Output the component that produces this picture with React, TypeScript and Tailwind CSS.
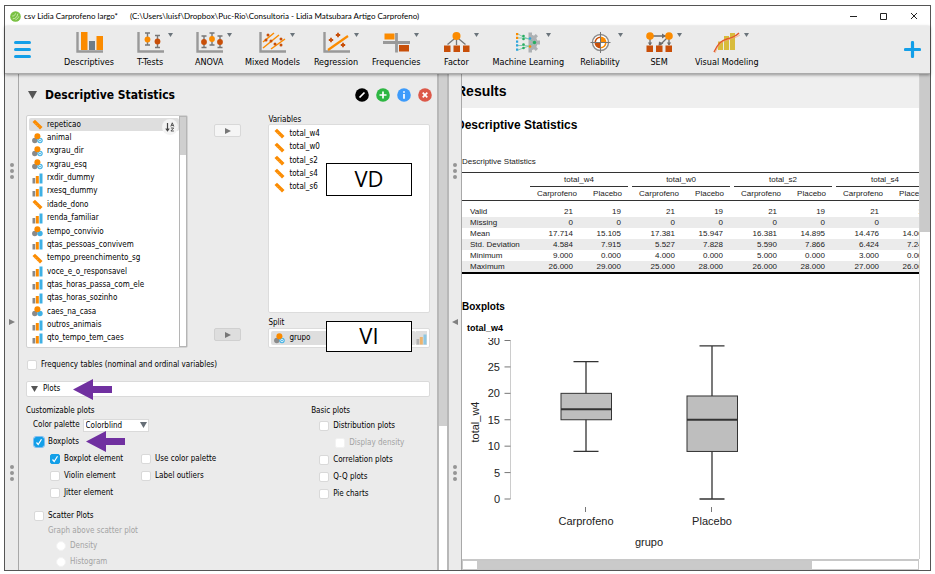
import type { ReactNode } from 'react'
import { clsx } from 'clsx'

type VariableType = 'scale' | 'nominal' | 'nominalText' | 'ordinal'

interface Variable {
  name: string
  type: VariableType
}

const AVAILABLE: Variable[] = [
  { name: 'repeticao', type: 'scale' },
  { name: 'animal', type: 'nominalText' },
  { name: 'rxgrau_dir', type: 'nominalText' },
  { name: 'rxgrau_esq', type: 'nominalText' },
  { name: 'rxdir_dummy', type: 'ordinal' },
  { name: 'rxesq_dummy', type: 'ordinal' },
  { name: 'idade_dono', type: 'scale' },
  { name: 'renda_familiar', type: 'ordinal' },
  { name: 'tempo_convivio', type: 'nominal' },
  { name: 'qtas_pessoas_convivem', type: 'ordinal' },
  { name: 'tempo_preenchimento_sg', type: 'scale' },
  { name: 'voce_e_o_responsavel', type: 'ordinal' },
  { name: 'qtas_horas_passa_com_ele', type: 'ordinal' },
  { name: 'qtas_horas_sozinho', type: 'ordinal' },
  { name: 'caes_na_casa', type: 'nominal' },
  { name: 'outros_animais', type: 'ordinal' },
  { name: 'qto_tempo_tem_caes', type: 'ordinal' },
]

const SELECTED = ['total_w4', 'total_w0', 'total_s2', 'total_s4', 'total_s6']

const GROUPS = ['total_w4', 'total_w0', 'total_s2', 'total_s4']

const STATS = [
  { label: 'Valid', values: ['21', '19', '21', '19', '21', '19', '21', '19'] },
  { label: 'Missing', values: ['0', '0', '0', '0', '0', '0', '0', '0'] },
  { label: 'Mean', values: ['17.714', '15.105', '17.381', '15.947', '16.381', '14.895', '14.476', '14.000'] },
  { label: 'Std. Deviation', values: ['4.584', '7.915', '5.527', '7.828', '5.590', '7.866', '6.424', '7.243'] },
  { label: 'Minimum', values: ['9.000', '0.000', '4.000', '0.000', '5.000', '0.000', '3.000', '0.000'] },
  { label: 'Maximum', values: ['26.000', '29.000', '25.000', '28.000', '26.000', '28.000', '27.000', '26.000'] },
]

const ORANGE = '#fb8b00'
const RUST = '#c84f09'
const GREY = '#999999'

// ---------- ribbon icons (27 x 21) ----------

function Axes() {
  return <path d="M1.5 0V19.5H27" fill="none" stroke={GREY} strokeWidth="2.4" />
}

function ErrorBar({ x, y, top, bottom, color }: { x: number; y: number; top: number; bottom: number; color: string }) {
  return (
    <g>
      <path d={`M${x} ${top}V${bottom}M${x - 2.5} ${top}h5M${x - 2.5} ${bottom}h5`} stroke="#777" strokeWidth="1.4" fill="none" />
      <circle cx={x} cy={y} r="2.9" fill={color} />
    </g>
  )
}

function Star({ x, y }: { x: number; y: number }) {
  return <path d={`M${x - 2.2} ${y}h4.4M${x} ${y - 2.2}v4.4`} stroke={RUST} strokeWidth="1.8" />
}

const ICONS: Record<string, ReactNode> = {
  Descriptives: (
    <>
      <Axes />
      <path d="M5 0h6.5v18H5zM20.5 4H27v14h-6.5z" fill={ORANGE} />
      <path d="M13 9h6v9h-6z" fill="#6f7d87" />
    </>
  ),
  'T-Tests': (
    <>
      <Axes />
      <ErrorBar x={10.5} y={7.5} top={1} bottom={13} color={ORANGE} />
      <ErrorBar x={20.5} y={9.5} top={3.5} bottom={15.5} color={RUST} />
    </>
  ),
  ANOVA: (
    <>
      <Axes />
      <ErrorBar x={8} y={10} top={4} bottom={15.5} color={RUST} />
      <ErrorBar x={16} y={7} top={1} bottom={13} color={ORANGE} />
      <ErrorBar x={24} y={10} top={4} bottom={15.5} color={RUST} />
    </>
  ),
  'Mixed Models': (
    <>
      <Axes />
      <path d="M4 10L15 1M4 16L20 3M12 17L26 7" stroke={ORANGE} strokeWidth="1.5" />
      <g fill={RUST}>
        <circle cx="9" cy="3" r="1.5" /><circle cx="7" cy="8" r="1.5" /><circle cx="12" cy="9" r="1.5" />
        <circle cx="16" cy="12" r="1.5" /><circle cx="22" cy="7" r="1.5" /><circle cx="22" cy="13" r="1.5" />
      </g>
    </>
  ),
  Regression: (
    <>
      <Axes />
      <path d="M5 18L25 4" stroke={ORANGE} strokeWidth="2.2" />
      <Star x={8} y={8} /><Star x={15} y={3} /><Star x={20} y={13} />
    </>
  ),
  Frequencies: (
    <>
      <path d="M1.5 1.5h10v6h-10z" fill={ORANGE} />
      <path d="M16 13h10v6.5H16z" fill={RUST} />
      <path d="M0 10.5h27M13.5 1v19.5" stroke={GREY} strokeWidth="2.8" />
    </>
  ),
  Factor: (
    <>
      <path d="M13.5 5L4.500 12.500M13.500 5v8M13.500 5l9 7.500" stroke="#777" strokeWidth="1.3" />
      <circle cx="13.5" cy="4" r="4" fill={ORANGE} />
      <path d="M1 13.5h6.5v6.5H1zM10.5 13.5H17v6.5h-6.5zM20 13.5h6.5v6.5H20z" fill={RUST} />
    </>
  ),
  'Machine Learning': (
    <>
      <path d="M13.5 0.5H17V3a8 8 0 0 1 2 .8L20.800 2L23 4.200L21.300 6a8 8 0 0 1 .9 2.500H25V12.500H22.200a8 8 0 0 1-.9 2.500L23 16.800L20.800 19L19 17.200a8 8 0 0 1-2 .8V20.500H13.500z" fill="#adb1b3" />
      <path d="M3 2L8.500 5L14 7L19.500 10.500L14 14L8.500 16L3 18M3 6H8.500M3 13.500H8.500L14 14M8.500 6L14 7" stroke="#79c9a8" strokeWidth=".9" fill="none" />
      <path d="M1 1h2.200v2.200H1zM1 4.700h2.200v2.200H1z" fill={ORANGE} />
      <path d="M1 8.500h2.200v2.200H1zM1 12.300h2.200v2.200H1zM1 16.500h2.200v2.200H1z" fill="#2da5dc" />
      <g fill="#27ae60">
        <circle cx="8.5" cy="4" r="1.3" /><circle cx="8.500" cy="7" r="1.3" />
        <circle cx="8.5" cy="12.500" r="1.3" /><circle cx="8.500" cy="16" r="1.3" /><circle cx="19.5" cy="10.5" r="1.7" />
      </g>
      <circle cx="15" cy="6.500" r="1.3" fill="#2da5dc" />
      <circle cx="15" cy="14.500" r="1.3" fill={ORANGE} />
    </>
  ),
  Reliability: (
    <>
      <circle cx="13.5" cy="10.5" r="8" fill="#fff" stroke="#8c8c8c" strokeWidth="1.4" />
      <path d="M13.5 10.5V4.500A6 6 0 0 1 19.500 10.500z" fill={ORANGE} />
      <path d="M13.5 10.500V16.500A6 6 0 0 1 7.500 10.500z" fill={RUST} />
      <path d="M8.200 10.500A5.300 5.300 0 0 1 13.500 5.200" fill="none" stroke={RUST} strokeWidth="1.6" />
      <path d="M18.800 10.500A5.300 5.300 0 0 1 13.500 15.800" fill="none" stroke={ORANGE} strokeWidth="1.6" />
      <path d="M13.5 0v21M3.500 10.500h20" stroke="#777" strokeWidth="1" />
    </>
  ),
  SEM: (
    <>
      <path d="M4 4h18M4 6v7M23 6v7M22 5l-8 8" stroke="#6c6c6c" strokeWidth="1.3" />
      <path d="M16 1.500L20 4l-4 2.500zM1.800 10.500h4.400L4 13.500zM20.800 10.500h4.400L23 13.500zM13 9.500l4.500 2L12.500 14z" fill="#6c6c6c" />
      <circle cx="4" cy="4" r="3.8" fill={ORANGE} /><circle cx="23" cy="4" r="3.8" fill={ORANGE} />
      <path d="M.5 13.500H7V20H.5zM10 13.500h6.500V20H10zM19.500 13.500H26V20h-6.500z" fill={RUST} />
    </>
  ),
  'Visual Modeling': (
    <>
      <path d="M5 9.5h5V18H5zM11 4h5v14h-5zM17 1h5v17h-5z" fill="#d8bc3c" />
      <path d="M1 20C5 12 8 8.500 14 7S23 4 26 1" stroke="#e4572a" strokeWidth="1.4" fill="none" />
      <path d="M2 21C6 11 10 9.500 15 8S24 5 27 3" stroke="#eea36d" strokeWidth=".7" fill="none" />
    </>
  ),
}

const MODULES = Object.keys(ICONS)

function RibbonButton({ name }: { name: string }) {
  return (
    <button type="button" className="flex min-w-[46px] shrink-0 flex-col items-center gap-[3px]">
      <span className="flex items-start">
        <svg viewBox="0 0 27 21" className="ml-[9px] h-[21px] w-[27px]" aria-hidden="true">{ICONS[name]}</svg>
        <svg viewBox="0 0 5 4" className="ml-1 mt-px h-1 w-[5px]" aria-hidden="true">
          {name !== 'Descriptives' && <path d="M0 0h5L2.500 4z" fill="#6b747b" />}
        </svg>
      </span>
      <span className="whitespace-nowrap text-[9px] leading-[12px] text-black">{name}</span>
    </button>
  )
}

// ---------- variable lists ----------

function TypeIcon({ type, faded }: { type: VariableType; faded?: boolean }) {
  return (
    <svg viewBox="0 0 11 11" className={clsx('size-[11px] shrink-0', faded && 'opacity-50')} aria-hidden="true">
      {type === 'scale' && (
        <>
          <path d="M.5 3L3 .7L10.500 8L8 10.500z" fill={ORANGE} />
          <path d="M3 5.300l1-1M4.700 7l1-1M6.500 8.700l1-1" stroke="#ffc27a" strokeWidth=".6" />
        </>
      )}
      {type === 'ordinal' && (
        <>
          <path d="M.5 5h2.700v5.500H.5z" fill="#8a8a8a" />
          <path d="M3.800 3h3v7.500h-3z" fill={ORANGE} />
          <path d="M7.500 .5h3v10h-3z" fill="#3fb0e4" />
        </>
      )}
      {(type === 'nominal' || type === 'nominalText') && (
        <>
          <circle cx="2.8" cy="7.5" r="2.7" fill="#8a8a8a" />
          <circle cx="8" cy="7.5" r="2.7" fill="#3fb0e4" />
          <circle cx="5.4" cy="3.2" r="3" fill={ORANGE} />
          {type === 'nominalText' && <circle cx="8" cy="7.5" r="1.3" fill="none" stroke="#fff" strokeWidth=".8" />}
        </>
      )}
    </svg>
  )
}

function VariableRow({ name, type, selected }: Variable & { selected?: boolean }) {
  return (
    <li className={clsx('flex flex-1 items-center gap-1 rounded-[2px] pl-[3px] text-[8px] leading-none', selected && 'bg-[#dedede]')}>
      <TypeIcon type={type} />
      <span>{name}</span>
    </li>
  )
}

function AssignButton({ label, active }: { label: string; active?: boolean }) {
  return (
    <button
      type="button"
      aria-label={label}
      className={clsx('flex h-[13px] w-[27px] items-center justify-center rounded-[2px] border', active ? 'border-[#d0d0d0] bg-[#dedede]' : 'border-[#d8d8d8] bg-[#f5f5f5]')}
    >
      <svg viewBox="0 0 6 6" className="size-[6px]" aria-hidden="true"><path d="M0 0l6 3l-6 3z" fill="#777" /></svg>
    </button>
  )
}

// ---------- form controls ----------

interface ToggleProps {
  label: string
  kind?: 'checkbox' | 'radio'
  checked?: boolean
  focused?: boolean
  disabled?: boolean
  className?: string
}

function Toggle({ label, kind = 'checkbox', checked, focused, disabled, className }: ToggleProps) {
  return (
    <label className={clsx('flex h-[17px] items-center gap-1 whitespace-nowrap', disabled && 'text-[#a3a3a3]', className)}>
      <span className="relative flex">
        <input
          type={kind}
          defaultChecked={checked}
          disabled={disabled}
          className={clsx(
            'size-[10px] appearance-none border border-[#d9d9d9] bg-white checked:border-[#139fe8] checked:bg-[#139fe8] disabled:border-[#f2f2f2]',
            kind === 'radio' ? 'rounded-full' : 'rounded-[2px]',
            focused && 'outline outline-[#7fbdf0]',
          )}
        />
        {checked && (
          <svg viewBox="0 0 10 10" className="pointer-events-none absolute inset-0 size-[10px]" aria-hidden="true">
            <path d="M2.500 5.500L4.200 7.500L7.500 2.300" stroke="#fff" strokeWidth="1.2" fill="none" />
          </svg>
        )}
      </span>
      {label}
    </label>
  )
}

function Arrow({ className }: { className: string }) {
  return (
    <svg viewBox="0 0 39 21" className={clsx('absolute h-[21px] w-[39px]', className)} aria-hidden="true">
      <path d="M0 10.500L20 0V7H39V14H20V21z" fill="#7030a0" />
    </svg>
  )
}

function Note({ children, className }: { children: string; className: string }) {
  return (
    <div className={clsx('absolute flex w-[86px] items-center justify-center border border-black bg-white pb-[3px] font-[Open_Sans,sans-serif] text-[22px] leading-none text-black', className)}>
      {children}
    </div>
  )
}

function Grip() {
  return (
    <span className="flex flex-col gap-[2px]">
      <i className="size-1 rounded-full bg-[#959595]" />
      <i className="size-1 rounded-full bg-[#959595]" />
      <i className="size-1 rounded-full bg-[#959595]" />
    </span>
  )
}

function Splitter({ direction }: { direction: 'left' | 'right' }) {
  return (
    <div className={clsx('flex shrink-0 flex-col items-center justify-between border-r border-[#a8a8a8] bg-[#ebebeb] py-[89px]', direction === 'right' ? 'w-[14px]' : 'w-[13px]')}>
      <Grip />
      <svg viewBox="0 0 6 6" className="size-[6px]" aria-hidden="true">
        <path d={direction === 'right' ? 'M0 0l6 3l-6 3z' : 'M6 0L0 3l6 3z'} fill="#808080" />
      </svg>
      <Grip />
    </div>
  )
}

function ActionIcon({ label, color, path }: { label: string; color: string; path: string }) {
  return (
    <button type="button" aria-label={label}>
      <svg viewBox="0 0 14 14" className="size-[14px]" aria-hidden="true">
        <circle cx="7" cy="7" r="6.8" fill={color} />
        <path d={path} stroke="#fff" strokeWidth="1.7" fill="none" />
      </svg>
    </button>
  )
}

function VariablesSection() {
  return (
    <div className="relative grid h-[233px] grid-cols-[2fr_1fr_2fr]">
      <div className="relative flex min-h-0 rounded-[2px] border border-[#d2d2d2] bg-white">
        <ul className="flex flex-1 flex-col py-[2px] pl-[2px]">
          {AVAILABLE.map((v, i) => (
            <VariableRow key={v.name} {...v} selected={i === 0} />
          ))}
        </ul>
        <button type="button" aria-label="Sort variables" className="absolute top-[3px] right-[9px] flex size-4 items-center justify-center rounded-full bg-[#f3f3f3]">
          <svg viewBox="0 0 10 10" className="size-[10px]" aria-hidden="true">
            <path d="M2.500 1v7M.8 6.500L2.500 8.800L4.200 6.500" stroke="#444" strokeWidth="1.2" fill="none" />
            <path d="M5.800 4.500L7.300 .8L8.800 4.500M6.300 3.400h2M5.900 6h2.800L5.900 9h3" stroke="#444" strokeWidth=".9" fill="none" />
          </svg>
        </button>
        <div className="w-[8px] border border-[#b5b5b5] bg-white">
          <div className="h-[38px] bg-[#cfcfcf]" />
        </div>
      </div>
      <div className="flex flex-col items-center justify-between pt-[9px] pb-[7px]">
        <AssignButton label="Assign to variables" />
        <AssignButton label="Assign to split" active />
      </div>
      <div className="flex flex-col">
        <h2 className="leading-[9px]">Variables</h2>
        <div className="flex-1 rounded-[2px] border border-[#dcdcdc] bg-white px-[2px] pt-[2px]">
          <ul className="flex h-[67px] flex-col">
            {SELECTED.map((name) => (
              <VariableRow key={name} name={name} type="scale" />
            ))}
          </ul>
        </div>
        <h2 className="pt-[5px] leading-[10px]">Split</h2>
        <div className="flex h-5 rounded-[2px] border border-[#dcdcdc] bg-white p-[2px]">
          <ul className="flex flex-1">
            <VariableRow name="grupo" type="nominalText" selected />
          </ul>
          <span className="flex items-end bg-[#dedede]"><TypeIcon type="ordinal" faded /></span>
        </div>
      </div>
      <Note className="top-[48px] right-[18px] h-[33px]">VD</Note>
      <Note className="top-[206px] right-[18px] h-[31px]">VI</Note>
    </div>
  )
}

function PlotOptions() {
  return (
    <div className="mt-2 grid grid-cols-[12fr_5fr]">
      <div>
        <h3 className="leading-[12px]">Customizable plots</h3>
        <div className="mt-px flex h-[14px] items-center gap-[3px] pl-[7px]">
          <label htmlFor="palette">Color palette</label>
          <span className="relative">
            <select id="palette" className="block h-[13px] w-[66px] appearance-none border border-[#dadada] bg-white pl-[2px] leading-[11px]">
              <option>Colorblind</option>
            </select>
            <svg viewBox="0 0 7 6" className="pointer-events-none absolute top-[3px] right-[2px] h-[6px] w-[7px]" aria-hidden="true">
              <path d="M0 0h7L3.500 6z" fill="#666e76" />
            </svg>
          </span>
        </div>
        <div className="relative mt-px">
          <Toggle label="Boxplots" checked focused className="pl-2" />
          <Arrow className="top-[-2px] left-[60px]" />
        </div>
        <div className="flex pl-6">
          <div className="w-[91px]">
            <Toggle label="Boxplot element" checked />
            <Toggle label="Violin element" />
            <Toggle label="Jitter element" />
          </div>
          <div>
            <Toggle label="Use color palette" />
            <Toggle label="Label outliers" />
          </div>
        </div>
        <Toggle label="Scatter Plots" className="mt-[6px] pl-2" />
        <fieldset disabled className="pl-[22px] text-[#a3a3a3]">
          <legend className="leading-[13px]">Graph above scatter plot</legend>
          <Toggle kind="radio" label="Density" disabled className="pl-2" />
          <Toggle kind="radio" label="Histogram" disabled className="-mt-px pl-2" />
        </fieldset>
      </div>
      <div>
        <h3 className="leading-[12px]">Basic plots</h3>
        <div className="pl-2">
          <Toggle label="Distribution plots" />
          <Toggle label="Display density" disabled className="pl-4" />
          <Toggle label="Correlation plots" />
          <Toggle label="Q-Q plots" />
          <Toggle label="Pie charts" />
        </div>
      </div>
    </div>
  )
}

function AnalysisForm() {
  return (
    <section className="flex w-[48%] shrink-0">
      <Splitter direction="right" />
      <div className="min-w-0 flex-1 bg-[#ebebeb] px-[7px] text-[8px] text-black">
        <header className="flex h-[41px] items-center">
          <svg viewBox="0 0 9 8" className="ml-[2px] h-2 w-[9px]" aria-hidden="true"><path d="M0 0h9L4.500 8z" fill="#555" /></svg>
          <h1 className="ml-2 flex-1 text-[12px] font-bold">Descriptive Statistics</h1>
          <div className="-mr-[2px] flex gap-[7px]">
            <ActionIcon label="Rename" color="#000" path="M4.500 9.500L9.500 4.500" />
            <ActionIcon label="Duplicate" color="#2db742" path="M7 3.500v7M3.500 7h7" />
            <ActionIcon label="Information" color="#3d9bfb" path="M7 3.300v1.500M7 6v4.700" />
            <ActionIcon label="Remove" color="#dc5849" path="M4.700 4.700l4.600 4.600M9.300 4.700L4.700 9.300" />
          </div>
        </header>
        <VariablesSection />
        <Toggle label="Frequency tables (nominal and ordinal variables)" className="my-2 pl-px" />
        <div className="relative">
          <button type="button" className="flex h-4 w-full items-center gap-[5px] rounded-[2px] border border-[#dadada] bg-white pl-1">
            <svg viewBox="0 0 7 6" className="h-[6px] w-[7px]" aria-hidden="true"><path d="M0 0h7L3.500 6z" fill="#555" /></svg>
            Plots
          </button>
          <Arrow className="top-[-2px] left-[47px]" />
        </div>
        <PlotOptions />
      </div>
      <div className="w-[12px] shrink-0 border-x-2 border-[#b8b8b8] bg-white">
        <div className="h-[71%] bg-[#cfcfcf]" />
      </div>
    </section>
  )
}

// ---------- results ----------

function StatsTable() {
  return (
    <table className="w-[476px] table-fixed border-collapse border-y border-[#333] border-b-2 border-b-black text-[8px] text-[#222]">
      <caption className="h-[15px] text-left leading-[10px]">Descriptive Statistics</caption>
      <colgroup>
        <col className="w-[68px]" />
        {GROUPS.map((g) => [<col key={g} className="w-[49px]" />, <col key={`${g}b`} className="w-[49px]" />, <col key={`${g}c`} className="w-1" />])}
      </colgroup>
      <thead>
        <tr className="h-[14px] leading-[13px]">
          <td />
          {GROUPS.map((g) => [
            <th key={g} colSpan={2} scope="colgroup" className="border-b border-[#333] p-0 font-normal">{g}</th>,
            <td key={`${g}s`} />,
          ])}
        </tr>
        <tr className="h-[14px] border-b border-[#333] leading-[13px]">
          <td />
          {GROUPS.map((g) => [
            <th key={g} scope="col" className="pr-[2px] text-right font-normal">Carprofeno</th>,
            <th key={`${g}p`} scope="col" className="pr-[6px] text-right font-normal">Placebo</th>,
            <td key={`${g}s`} />,
          ])}
        </tr>
      </thead>
      <tbody>
        <tr className="h-[5px]"><td /></tr>
        {STATS.map((row, r) => (
          <tr key={row.label} className={clsx('h-[11px] leading-[11px]', r % 2 === 1 && 'bg-[#ebebeb]')}>
            <th scope="row" className="py-0 pl-2 text-left font-normal whitespace-nowrap">{row.label}</th>
            {GROUPS.map((g, i) => [
              <td key={g} className="py-0 pr-[6px] text-right">{row.values[i * 2]}</td>,
              <td key={`${g}p`} className="py-0 pr-[7px] text-right">{row.values[i * 2 + 1]}</td>,
              <td key={`${g}s`} />,
            ])}
          </tr>
        ))}
      </tbody>
    </table>
  )
}

interface Box {
  label: string
  x: number
  min: number
  q1: number
  median: number
  q3: number
  max: number
}

const BOXES: Box[] = [
  { label: 'Carprofeno', x: 124, min: 9, q1: 15, median: 17, q3: 20, max: 26 },
  { label: 'Placebo', x: 250, min: 0, q1: 9, median: 15, q3: 19.5, max: 29 },
]

const TICKS = [0, 5, 10, 15, 20, 25, 30]

const scaleY = (value: number) => 161 - value * 5.283

function Boxplot() {
  return (
    <svg viewBox="0 0 440 220" className="block h-[220px] w-[440px] font-[Liberation_Sans,sans-serif] text-[11px]" role="img" aria-label="Boxplot of total_w4 by grupo">
      <path d={`M48.5 ${scaleY(30)}V${scaleY(0)}`} stroke="#ccc" />
      {TICKS.map((t) => (
        <g key={t}>
          <path d={`M42.5 ${scaleY(t)}h6`} stroke="#777" />
          <text x="38" y={scaleY(t) + 4} textAnchor="end" fill="#222">{t}</text>
        </g>
      ))}
      <text transform="translate(17 84) rotate(-90)" textAnchor="middle" fill="#222">total_w4</text>
      {BOXES.map((b) => (
        <g key={b.label} stroke="#333" strokeWidth="1.3">
          <path d={`M${b.x} ${scaleY(b.max)}V${scaleY(b.min)}M${b.x - 12.5} ${scaleY(b.max)}h25M${b.x - 12.5} ${scaleY(b.min)}h25`} />
          <rect x={b.x - 25} y={scaleY(b.q3)} width="50.5" height={scaleY(b.q1) - scaleY(b.q3)} fill="#bebebe" strokeWidth="1" />
          <path d={`M${b.x - 25} ${scaleY(b.median)}h50.5`} strokeWidth="2" />
          <path d={`M${b.x - 0.5} 169v5`} stroke="#777" strokeWidth="1" />
          <text x={b.x} y="187" textAnchor="middle" fill="#222" stroke="none">{b.label}</text>
        </g>
      ))}
      <text x="187" y="208" textAnchor="middle" fill="#222">grupo</text>
    </svg>
  )
}

function Results() {
  return (
    <section className="flex min-w-0 flex-1 flex-col bg-white font-[Liberation_Sans,sans-serif] text-black">
      <div className="flex flex-1">
        <div className="min-w-0 flex-1 overflow-hidden">
          <header className="bg-[#efefef]">
            <h1 className="-ml-[6px] text-[14px] leading-[34px] font-bold">Results</h1>
          </header>
          <h2 className="-ml-[6px] pb-[15px] text-[12px] leading-[34px] font-bold whitespace-nowrap">Descriptive Statistics</h2>
          <StatsTable />
          <h3 className="mt-[27px] text-[10px] leading-[12px] font-bold">Boxplots</h3>
          <h4 className="mt-[9px] mb-1 pl-[5px] text-[9px] leading-[12px] font-bold">total_w4</h4>
          <Boxplot />
        </div>
        <div className="w-[11px] shrink-0 border-l border-[#d0d0d0] bg-white">
          <div className="h-[158px] bg-[#cacaca]" />
        </div>
      </div>
      <div className="mr-[11px] h-[11px] border border-t-2 border-[#c8c8c8] pl-[14px]">
        <div className="h-full w-[76%] bg-[#cacaca]" />
      </div>
    </section>
  )
}

function TitleBar() {
  return (
    <header className="flex h-5 items-center bg-white pl-[5px] font-[Lato,sans-serif] text-[8px] text-black">
      <svg viewBox="0 0 12 12" className="size-[11px]" aria-hidden="true">
        <circle cx="6" cy="6" r="5.8" fill="#7ac143" />
        <path d="M3 8.500C6 8.500 8 6.500 8.500 3M2.500 5.500c2 0 3-1 3.500-3M6 9.500c2-.5 3-2 3.500-3.500" stroke="#d9f0c4" strokeWidth=".9" fill="none" />
      </svg>
      <span className="ml-[3px] whitespace-pre">csv Lidia Carprofeno largo*</span>
      <span className="ml-3 flex-1 whitespace-pre">(C:\Users\luisf\Dropbox\Puc-Rio\Consultoria - Lidia Matsubara Artigo Carprofeno)</span>
      <div className="flex gap-[22px] pr-3">
        <button type="button" aria-label="Minimize"><svg viewBox="0 0 8 8" className="size-2"><path d="M0 4.500h7" stroke="#222" /></svg></button>
        <button type="button" aria-label="Maximize"><svg viewBox="0 0 8 8" className="size-2"><path d="M.5 1.500h6v6h-6z" stroke="#222" fill="none" /></svg></button>
        <button type="button" aria-label="Close"><svg viewBox="0 0 8 8" className="size-2"><path d="M1 1l6 6M7 1L1 7" stroke="#222" /></svg></button>
      </div>
    </header>
  )
}

export default function App() {
  return (
    <div className="flex min-h-screen flex-col bg-white px-1 pt-[5px] pb-[3px] font-[DejaVu_Sans_Condensed,DejaVu_Sans,sans-serif]">
      <div className="flex flex-1 flex-col border border-[#555]">
        <TitleBar />
        <nav className="relative z-10 flex h-12 items-start border-b border-[#aaa] bg-[#ebebeb] pt-[6px] shadow-[0_1px_3px_rgba(0,0,0,0.4)]">
          <button type="button" aria-label="Menu" className="mt-[9px] ml-[9px] flex w-[17px] flex-col gap-1">
            <i className="h-[3px] rounded-full bg-[#139fe8]" />
            <i className="h-[3px] rounded-full bg-[#139fe8]" />
            <i className="h-[3px] rounded-full bg-[#139fe8]" />
          </button>
          <div className="ml-[33px] flex flex-1 gap-[13px] overflow-hidden">
            {MODULES.map((name) => (
              <RibbonButton key={name} name={name} />
            ))}
          </div>
          <button type="button" aria-label="Modules" className="mt-[9px] mr-[9px]">
            <svg viewBox="0 0 17 17" className="size-[17px]" aria-hidden="true">
              <path d="M8.500 1.500v14M1.500 8.500h14" stroke="#139fe8" strokeWidth="3.2" strokeLinecap="round" />
            </svg>
          </button>
        </nav>
        <main className="flex flex-1">
          <AnalysisForm />
          <Splitter direction="left" />
          <Results />
        </main>
      </div>
    </div>
  )
}
